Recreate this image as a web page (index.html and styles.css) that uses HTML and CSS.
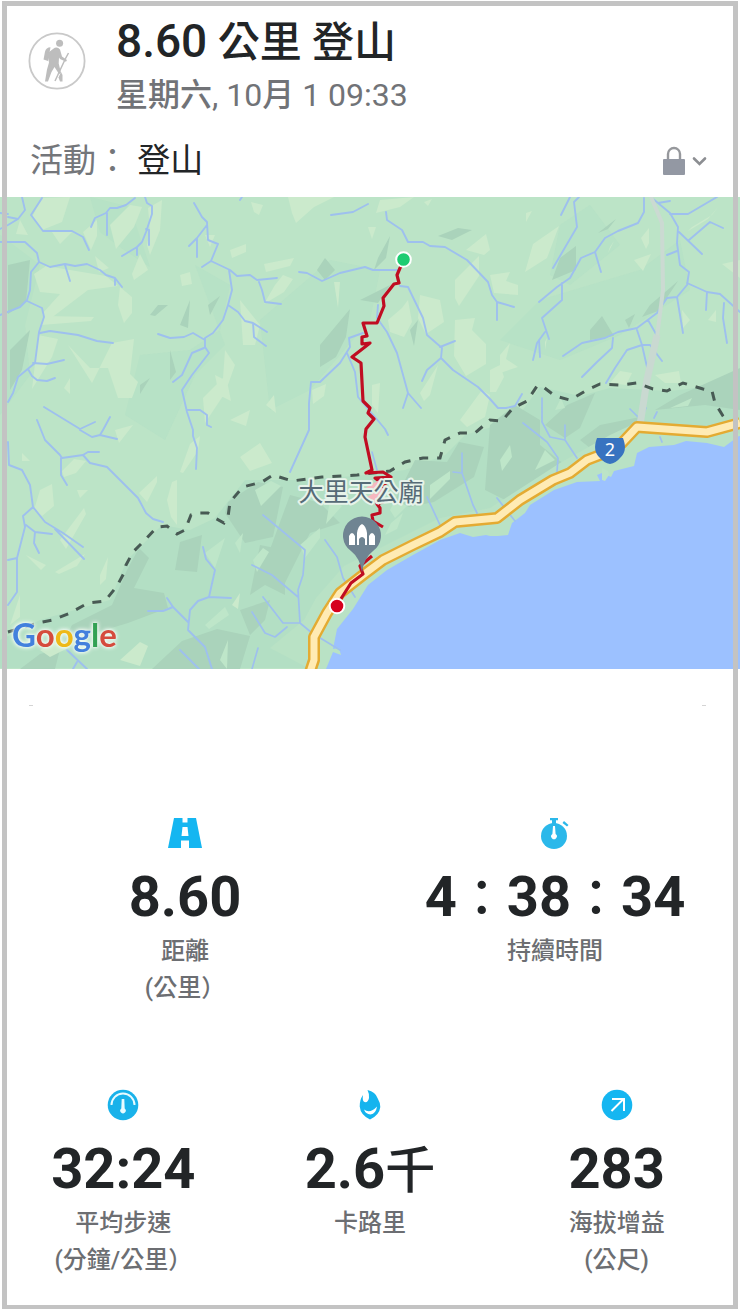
FILE: index.html
```html
<!DOCTYPE html>
<html lang="zh-Hant">
<head>
<meta charset="utf-8">
<meta name="viewport" content="width=device-width, initial-scale=1">
<title>8.60 公里 登山</title>
<link rel="stylesheet" href="styles.css">
</head>
<body>
<main class="page">
  <header class="header">
    <svg class="avatar" viewBox="0 0 58 58" aria-hidden="true">
      <circle cx="29" cy="29" r="27.6" fill="none" stroke="#c9c9c9" stroke-width="1.8"/>
      <g fill="#bdbdbd">
        <circle cx="31.600" cy="11.300" r="3.500"/>
        <path d="M22.500 15.300q-4.500.2-5.500 4.500l-1.500 7.700 4.500 1.500z"/>
        <path d="M25 17q4-3 7 .5l2 7 3.500 2.500 1.500 1-1 1.800-6-2.800-1-1.500-.3 6 2.300 9.500-2 1-4.500-7-3 5-3.500 9.500h-3l2-12 2-7-1-5-2.500-.5 1-3z"/>
        <path d="M33 40l1.500 3v6.500h-2.500l-1.500-4z"/>
      </g>
      <path d="M40.500 21l-3 5.500L27 49" fill="none" stroke="#bdbdbd" stroke-width="1.500"/>
    </svg>
    <div class="heading">
      <h1 class="title"><span class="title-number">8.60</span> 公里 登山</h1>
      <p class="date">星期六<span class="date-number">, 10</span>月<span class="date-number"> 1 09:33</span></p>
    </div>
  </header>
  <div class="activity">
    <p class="activity-text"><span class="activity-label">活動：</span> 登山</p>
    <button class="privacy" type="button" aria-label="隱私設定">
      <svg class="privacy-icon" viewBox="0 0 46 32" aria-hidden="true">
        <path d="M6 15V9a6 6 0 0 1 12 0v6" fill="none" stroke="#96989c" stroke-width="2.400"/>
        <rect x="1" y="14" width="22" height="16" rx="1" fill="#9398a3"/>
        <path d="M32 13.500l5.500 5.500 5.500-5.500" fill="none" stroke="#8c8e92" stroke-width="2.600" stroke-linecap="round"/>
      </svg>
    </button>
  </div>

  <svg class="map" viewBox="0 197 740 472" role="img" aria-label="路線地圖">
    <rect y="197" width="740" height="472" fill="#bce4c7"/>
    <g fill="#b2dfc5" opacity=".5">
      <path d="M0 235l40 30-15 60 5 50-30 40zM195 265l35 20-10 45-30 20-50 5-15 60 40 25 30-65 30-30zM90 197l40 10 20 60-30-20-20-15zM540 300l100-30 40-30 10 50-70 45-60 25-60-20zM260 320l70-60 50 10-10 50-60 70-40 20zM560 225l30-20 30 40-50 40-20-10z"/>
    </g>
    <path d="M0 640l40-20 70-20 17-40 35-35 28 5 25-12 30-38 60 0 60-5 40-5 40-15 20-20 50-15 25-33 40 9 30-8 60 3 50-6 20 3 0 60-60 20-160 110-70 90H0z" fill="#b3dfc4"/>
    <g fill="#aad3bb">
      <path d="M8 265l22-5-4 42-18 12zM10 350l20-20-8 40-12 20zM150 315l8-10 10 0-13 11zM180 325l10-25-2 28zM208 305l12-9-10 19zM140 385l10-7-10 16zM170 350l6 22-6 8z"/>
      <path d="M317 270l8-12 10 12-10 10zM320 345l30-36-4 28-10 20-16 10zM378 258l12-22-4 22-12 12zM438 236l20-8 14 2-20 10zM360 300l30-15-12 18zM410 330l8-10-4 26z"/>
      <path d="M598 233l18-14-8 10zM560 258l16-12 0 24-24 10zM590 330l12-14 12 20-24 4zM650 305l28-24-20 30-16 6zM625 320l10-6-6 14z"/>
      <path d="M72 625l40-20 15-35 12-22 10 10-15 30 30 5 4 15-40 15-50 15-20 15zM175 570l5-28 22-7-5 37zM228 502l30-20 25 5-10 50-28 6-20-30zM290 495l30 8 20 20-30 10-25 50-20-20zM260 545l25 5 0 45-20-10-15 10zM240 610l30-10-5 20-15 15zM152 669l30-28 35-12 33 7-10 33zM20 669l20-15 20-5-5 20zM395 500l20-40 32 2 12-20 25 5-10 30-40 25-25 5zM490 425l25-20 25 15 0 25 25 20-60 35-20-10zM545 425l22-20 28-12-15 35-15 10zM580 440l20-15 40-8-10 16-40 15zM655 410l25-15 60-27v42l-35-5-50 5z"/>
    </g>
    <g fill="#cbeacc">
      <path d="M42 198l28-1-8 25-20 8-10-13zM52 232h20l-12 12zM83 232l14-12 0 16-6 14zM95 256l14 12-10 4zM110 225l20-20 12 2-8 20-18 22zM148 208l14-8-2 30-10 25-3-10 3-15zM20 220l8 15-12-1zM140 254l8 16-14 10-2-6zM34 274l12-8 60 10 12 10-30 4-42 32-4-8 18-20-20-2zM44 316l50 1-3 4-50 4zM180 275l10-3 2 12-10 2zM230 250l16-6 0 8-14 6zM120 287l12 10 0 16-8 10-6-18zM205 235l10 0-5 12z"/>
      <path d="M36 355l2-20 20 4-6 18-20 32zM68 345l24 38 20-40 22-4-4 35 8 8-6 16-14 0-10-30-18 0zM64 388l6-10 0 16zM225 350l10 15-10 28-20 30-2-25 20-20zM215 375l12 6 4 20-12-6zM240 300l20 25-5 20-12 0zM230 420l20-10-4 16z"/>
      <path d="M254 212l-3-10 12 3-4 10zM288 197l46 0-20 10-18 16-4-10zM380 200l34-3-14 10-24 6zM264 264l30-6-4 8-24 6zM275 285l8-10 10 4-9 13-20 12zM334 282h6l-2 26zM368 227h8l-4 12zM388 320l14-12 6-8 4 22-8 15-14-5zM420 295l20 5 4 22-18 12-8-16zM455 280l24-24 0 20-20 30-4-8zM455 320l20-2-3 12 14 14 0 20-20 12-12-20zM466 250l20-16 4 16-6 5zM424 202l8-3-4 7zM312 390l14-6-2 12-11 8zM372 385l8-2-2 30-6-8zM266 405l8-10 2 18zM420 393l18-28-8 30-6 6zM460 420l22-30 8 5-5 22-18 10z"/>
      <path d="M525 272l8-28 26-18-12 32zM526 213l6-2-6 11zM641 238l8-10 0 15-3 6zM634 260l17-6-8 17zM722 264l18-4v18zM490 275l20-3-4 9 12 4 0 10-24-2zM610 247l4-6-6 12zM692 227l20-12 6-8-10 12-20 12zM682 310l8 10-7 8zM708 320l8-10 0 12zM500 355l10-12-4 16 12 8-18 6zM545 342l2-4-2 12zM655 375l24-4 2 12-16 0zM490 370l10-5 4 12-8 15h-6zM700 445l18-10-3 10zM610 383l10-12 12 2-6 12z"/>
      <path d="M62 471l12-12 12 2-10 12-12 4zM22 453l8 8-8 0zM40 490l12-6 2 22-12 10-8-6zM60 540l24-32 2 6-20 35zM77 490h11l-8 8zM139 493l18-17 0 6-10 20zM167 500l5-18 5-2 0 45-6-8zM180 472l10-28 10-8-2 15-15 22zM100 575l8-18-2 22-6 6zM55 572l30-18-8 12-18 8zM26 555l20 10-5 5zM10 625l10-30 0 22zM232 605l8-12-2 16zM240 457l20-14 12 20-22 8zM115 430l18-5-14 18zM40 650l20-10 10 7-20 10zM120 660l20-18 8 4-8 20z"/>
    </g>
    <g fill="#bee6c9">
      <path d="M205 553l20-15-10 30zM235 543l8-10-3 20zM253 560l10-12 6 4-12 20zM330 500l12 6-16 18zM300 545l20-17 0 10-15 20zM255 490l16-9 10 5-20 20zM205 625l20-18 4 8-20 14zM220 660l8-20-1 29zM385 535l6-12 12-10-6 16zM430 485l20-14 0 8-20 20zM500 460l10-15 2 12-10 14zM555 410l6-12 4 10zM670 408l22-10-4 8zM390 510l5-10 12 6-12 12zM535 470l10-20 10 10zM320 610l14-10-16 44z"/>
    </g>
    <path d="M270 648l34-28 12-22 28-32 36-18 60-30 50-10 70-45 50-28 30-14 90 8 10 5V669H310z" fill="#b9e2c5"/>
    <path d="M326 669l7-17 8 3-2-7-6 1 4-20 16-20 15-24 19-15 26-15 27-15 20-7 13 4 13-2 4 1 8 0 10-1 4-12 13-10 5-8 24-15 23-8 23-1-3-6 5-2 9 4 3-6 20-5 3-13 12-6 25-2 12-4 21 2 17 4 15-11 5 0v239z" fill="#9cc1ff"/>
    <path d="M602 480l0-12 6 3 1 4-4 6z" fill="#bce4c7"/>

    <g fill="none" stroke="#9ec0ee" stroke-width="1.900" stroke-linejoin="round" stroke-linecap="round">
      <path d="M22 197l3 13-7 9-10-2M0 213l8 1M0 229l8-4 10-6M42 198l-11 17 12 16h29l11 6 6 13M135 198l-9 7-9 3-7 0-4 5-11 5-4 9M107 213v22M145 197l2 6 5 3 0 8-6 18-4 10-5 5-15 9M146 229l3 1v15M137 247v8"/>
      <path d="M0 242h25l12 11 2 9 11 5 15-3 10 2 12-2 13 6 6 5 9 3 7 9M115 278v7M65 265l5 16M39 262l-8 10-1 18-3 10-7 7-20 8M27 301l15 7 2 9-5 15-4 31-17 14-5 16-5 9M40 333l10-2 28 4 19 6 16 2M33 363l14 1 17-4M28 369l4 7 5 4 10 1 8-3"/>
      <path d="M194 203l8 14 5 5 1 18 10 4-7 17 19 9 7 6 13-1 7 5 20-2M259 282l3 8 3 12 16 2M211 261l-9 6M207 225l-10 13-8 8M197 238v19M229 270l3 20-4 15-5 15-10 13-8 5v9l4 6-17 22-10 15 5 22 6 18 0 6 4 12-1 21M187 410h13l7 5v10l4 2M158 334l12 4 14-1 9-4 12 7M204 348l-12 5-10 22-9 7M228 305l10 7 7 9 8 2 14 9M253 323l1 14 12 9M240 200l2-3"/>
      <path d="M44 407l36 22 15-7M110 417l-7 13M80 430l12 7 8-2 17 4M103 430l-3 5M37 420l4 10 4 10 15 15 2 3 21-3 7 8 17 4 31 31 8 15 7 6 10 3M83 455l5-3h11M61 458v17l6 10M8 442l1 23 13 5 8 15 3 22 12 15 18 11 20 14M55 529l29 30M33 507l-10 9 2 11-8 31v34l-9 13M17 558l-9 2M26 525l9 7 17 2M35 532l-1 11 5 10M203 547l3 12 9 11-6 27-11 4-8 9-2 20 17 17 7 22M209 597l22 1M167 598l6 9 15 15M148 611h15l10-4M180 650l19 19M67 650l20 19M77 662l-4 7"/>
      <path d="M331 215l22-3 15-8M386 212l1 8 15 10 6 12h15l7 4 15 1 22 13 21 22 4 13 5 7 17 5M497 302v18M299 272l8 1 15 8 18-8 25-6 8 3h24M400 286l8 1 15 31 4 17 15 13-1 10 12 12 25 17 12 12 8 9 8 0 9-2 7-12M440 347l15-6M441 358l-14 12-5 11M378 305l-1 13 10 14 10 21 11 40 13 15M408 393l-5 15M363 333l-14 5 1 9-10 16-20 19h-9l-2 21 0 27-19 42M347 353l8 19 3 25 27 32 3 6"/>
      <path d="M570 197l-9 18M579 197l-5 5 3 25-24 41M644 198v14l-6 11-20 8-13 7-10 14-14 6-11 20-13 9-18 15M595 252l6 20M562 283v17l-20 18 7 21M545 332l-8 11-4 17M539 340l1 17M652 198l18 15 8 14-1 16 3 22 9 7-2 13-10 12-10 1-10 15-20 15-19 4-13 6-23 5-19 13M670 214h18l29-17M658 203l12-2M679 232l23 22M689 240l21-18 13 6M677 251l-10 4M687 283l20 9 13 2 20 18M707 292l-1 18M724 303l-1 15 4 25M677 297l6 36M648 320l8 14M613 338l-1 10-15 14-15 15M637 330l5 15-15 5-12 18-9 15M642 345l5 22M642 345h8l12 16"/>
      <path d="M542 398v24l8 15 15 3 12 18M523 423l24 19 11 16-1 14M565 425v14M462 453v20l11 32 4 8M453 472l9 1M427 497l13 28M263 515l42 35-2 25-5 15 2 33 12 10 28 17M252 565l20 10 26 22M325 540l12 17 6 21 12 19M263 597l20 26 17 0M252 612l13 21 10 4 12-10M258 648l-6 21M630 409l8 8M646 408l-4 9M657 412l-3 6M497 498l18 23M660 437l2 5M372 452l5 18" stroke-width="1.700"/>
    </g>
    <path d="M651 197l11 26 1 67-6 47" fill="none" stroke="#cbdad2" stroke-width="4"/>
    <path d="M657 335l-10 45-7 45" fill="none" stroke="#c9d9d1" stroke-width="7"/>
    <path d="M8 632l30-9 15-3 17-7 18-10 17-2 12-15 7-13 2-8 7-13 12-12 12-13 10-1 10 8 8-4 6-15 6-2h11l7 5 9 5 4-6 2-15 13-15 19-5 11-7 19 6 30-4 35-2 33-4 15-9 18-4h17l5-18 15-7 15 0 15-13 12 1 11-13 14-7 10-15 5 0 13 10 15 4 17-10 13-6 20 1 17-2 16 6 14 2 16-8 20 6 9 2 3 12 8 13 10 14" fill="none" stroke="#485a54" stroke-width="3" stroke-dasharray="9 9"/>

    <g fill="none" stroke-linejoin="round">
      <path d="M309 675l5-15v-23l13-24 13-20 23-18 20-15 30-15 27-13 15-10 42-4 23-18 33-20 17-7 17-13 13-5 22-12 15-16 70 5 33-9" stroke="#e4ab32" stroke-width="12"/>
      <path d="M309 675l5-15v-23l13-24 13-20 23-18 20-15 30-15 27-13 15-10 42-4 23-18 33-20 17-7 17-13 13-5 22-12 15-16 70 5 33-9" stroke="#ffebb4" stroke-width="7"/>
    </g>
    <path d="M597 438h26q5 13-3 20-4 5-10 6-6-1-10-6-8-7-3-20z" fill="#3873c0"/>
    <text class="road-number" x="610" y="456">2</text>

    <path d="M403 262l-3 6-3 7 2 8-5 1-11 14 1 8-7 17h-14l4 13-5 1v7l8-1-18 14 9 6 2 38 7 7-2 5 6 6-8 10-1 8 7 33-6 3 17-1 8 5-16 1 4 3 12-1-8 5-10 2 13 2-10 6 9 6-8 3 3 4 0 5-8 2 1 6 10 6M372 556l-12 10 3 8-12 9-14 22" fill="none" stroke="#c00d22" stroke-width="3.200" stroke-linejoin="round"/>
    <path d="M381 482l-9 5 11 4-11 6 8 6" fill="none" stroke="#f5b8bf" stroke-width="5"/>
    <text class="place-name" x="361" y="501">大里天公廟</text>
    <path d="M362 572q-2-14-11-21a19 19 0 1 1 22 0q-9 7-11 21z" fill="#6f8492"/>
    <path d="M349 545v-9q3-6 6 0v9zM357 545v-12q1-7 5-9 4 2 5 9v12h-2v-6q-3-4-6 0v6zM369 545v-9q3-6 6 0v9z" fill="#fff"/>
    <circle cx="403.500" cy="259.500" r="7.300" fill="#1dcc72" stroke="#fff" stroke-width="2"/>
    <circle cx="337" cy="606" r="7.300" fill="#d6001c" stroke="#fff" stroke-width="2"/>
    <text class="map-brand" x="12" y="647"><tspan fill="#4380dd">G</tspan><tspan fill="#d54b3d">o</tspan><tspan fill="#eeb918">o</tspan><tspan fill="#4380dd">g</tspan><tspan fill="#33a154">l</tspan><tspan fill="#d54b3d">e</tspan></text>
  </svg>

  <div class="divider" aria-hidden="true"><span class="speck"></span><span class="speck"></span></div>

  <section class="stats stats-two">
    <div class="stat">
      <svg class="stat-icon" viewBox="0 0 36 32" aria-hidden="true">
        <path fill="#15b6f1" d="M7 1h8.500v4.500h5V1H29l6 30H22v-7.500h-8V31H1zM15.500 10l-1 9h7l-1-9z"/>
      </svg>
      <p class="stat-value">8.60</p>
      <p class="stat-label">距離<br>(公里）</p>
    </div>
    <div class="stat">
      <svg class="stat-icon" viewBox="0 0 36 32" aria-hidden="true">
        <circle cx="17" cy="19" r="13" fill="#2bb8ea"/>
        <path d="M13 1h8v2.300h-2V7h-4V3.300h-2zM27 4l4.500 4-1.500 1.500-4.500-3.500z" fill="#2bb8ea"/>
        <path d="M16 9h2l.6 8a2.800 2.800 0 1 1-3.200 0z" fill="#fff"/>
      </svg>
      <p class="stat-value">4<span class="stat-unit">：</span>38<span class="stat-unit">：</span>34</p>
      <p class="stat-label">持續時間</p>
    </div>
  </section>

  <section class="stats stats-three">
    <div class="stat">
      <svg class="stat-icon" viewBox="0 0 36 32" aria-hidden="true">
        <circle cx="18" cy="16" r="15.300" fill="#19b2ea"/>
        <path d="M6.500 16a11.500 11.500 0 0 1 23 0" fill="none" stroke="#e8fbff" stroke-width="2"/>
        <path d="M16.700 10h2.600l.4 9.500a2.700 2.700 0 1 1-3.400 0z" fill="#e8fbff"/>
      </svg>
      <p class="stat-value">32:24</p>
      <p class="stat-label">平均步速<br>(分鐘/公里）</p>
    </div>
    <div class="stat">
      <svg class="stat-icon" viewBox="0 0 36 32" aria-hidden="true">
        <path fill="#15b4ee" d="M15.500 1q8 2 10 8 3 5 2.800 9-.8 8-10.300 12.500Q8.500 26 7.700 17.500 7.500 11 11 6q-1 6 1.500 7 3.500 1 4.500-4 .5-4-1.500-8z"/>
        <path d="M12 20.500q6 4.500 13-3-1 7-6.500 8-5-.5-6.500-5z" fill="#fff"/>
      </svg>
      <p class="stat-value">2.6<span class="stat-unit">千</span></p>
      <p class="stat-label">卡路里</p>
    </div>
    <div class="stat">
      <svg class="stat-icon" viewBox="0 0 36 32" aria-hidden="true">
        <circle cx="18" cy="16" r="15.300" fill="#15b6f1"/>
        <path d="M12.500 22L24 10.500M13 10h12v12" fill="none" stroke="#fff" stroke-width="2"/>
      </svg>
      <p class="stat-value">283</p>
      <p class="stat-label">海拔增益<br>(公尺)</p>
    </div>
  </section>
</main>
</body>
</html>
```

FILE: styles.css
```css
* {
  box-sizing: border-box;
}

body {
  margin: 0;
  background: #fff;
  color: #222527;
  font-family: Roboto, "Noto Sans CJK TC", sans-serif;
}

h1,
p {
  margin: 0;
}

.page {
  position: relative;
  padding-bottom: 30px;
}

/* Grey frame drawn over the full-bleed map */
.page::after {
  content: "";
  position: absolute;
  inset: 1px 2px 0;
  border: 5px solid #c3c3c3;
  border-bottom-width: 4px;
  pointer-events: none;
}

.header {
  display: flex;
  align-items: flex-start;
  gap: 30px;
  padding: 13px 28px 0;
}

.avatar {
  flex: none;
  width: 58px;
  height: 58px;
  margin-top: 19px;
}

.title {
  font-size: 42px;
  font-weight: 500;
  line-height: 56px;
}

.title-number {
  font-size: 46px;
}

.date {
  color: #717377;
  font-size: 32px;
  font-weight: 500;
  line-height: 48px;
}

.date-number {
  font-weight: 400;
}

.activity {
  display: flex;
  align-items: center;
  justify-content: space-between;
  padding: 18px 32px 12px 30px;
}

.activity-text {
  font-size: 33px;
  line-height: 48px;
}

.activity-label {
  color: #74767a;
}

.privacy {
  padding: 0;
  border: 0;
  background: none;
  cursor: pointer;
}

.privacy-icon {
  display: block;
  width: 46px;
  height: 32px;
}

.map {
  display: block;
  width: 100%;
  height: auto;
}

.road-number {
  fill: #fff;
  font-family: "Noto Sans", sans-serif;
  font-size: 18px;
  text-anchor: middle;
}

.place-name {
  fill: #566b77;
  stroke: #e6f3ea;
  stroke-width: 4px;
  stroke-linejoin: round;
  paint-order: stroke;
  font-family: "Noto Sans CJK TC", sans-serif;
  font-size: 25px;
  text-anchor: middle;
}

.map-brand {
  filter: drop-shadow(0 0 2px #f2faf4) drop-shadow(0 0 1px #f2faf4);
  font-family: Lato, sans-serif;
  font-size: 33px;
  font-weight: 700;
}

.divider {
  display: flex;
  justify-content: space-between;
  padding: 36px 34px 0 29px;
}

.speck {
  width: 4px;
  height: 1px;
  background: #d4d4d4;
}

.stats {
  display: grid;
  text-align: center;
}

.stats-two {
  grid-template-columns: repeat(2, 1fr);
  padding-top: 111px;
}

.stats-three {
  grid-template-columns: repeat(3, 1fr);
  padding-top: 82px;
}

.stat-icon {
  display: block;
  width: 36px;
  height: 32px;
  margin: 0 auto 16px;
}

.stat-value {
  margin-bottom: 4px;
  font-size: 56px;
  font-weight: 700;
  line-height: 64px;
}

.stat-unit {
  font-size: 50px;
  font-weight: 500;
  line-height: 1;
}

.stat-label {
  color: #6c6e72;
  font-size: 24px;
  font-weight: 500;
  line-height: 37px;
}
```
